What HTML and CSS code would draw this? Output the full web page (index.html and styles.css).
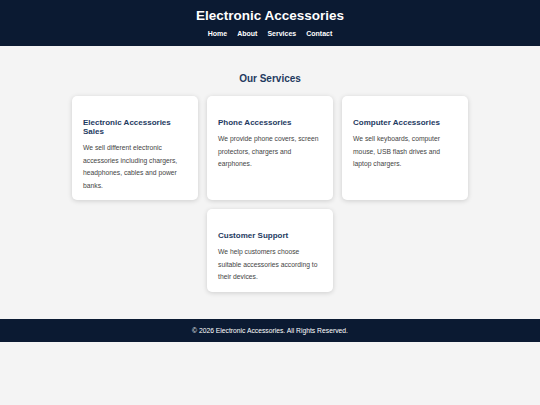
FILE: index.html
```html
<!DOCTYPE html>
<html lang="en">
<head>
<meta charset="utf-8">
<title>Electronic Accessories</title>
<link rel="stylesheet" href="styles.css">
</head>
<body>
<header class="site-header">
  <h1 class="site-title">Electronic Accessories</h1>
  <nav class="site-nav">
    <a href="#">Home</a>
    <a href="#">About</a>
    <a href="#">Services</a>
    <a href="#">Contact</a>
  </nav>
</header>
<main class="services">
  <h2 class="services-title">Our Services</h2>
  <div class="cards">
    <div class="card">
      <h3>Electronic Accessories Sales</h3>
      <p>We sell different electronic accessories including chargers, headphones, cables and power banks.</p>
    </div>
    <div class="card">
      <h3>Phone Accessories</h3>
      <p>We provide phone covers, screen protectors, chargers and earphones.</p>
    </div>
    <div class="card">
      <h3>Computer Accessories</h3>
      <p>We sell keyboards, computer mouse, USB flash drives and laptop chargers.</p>
    </div>
    <div class="card">
      <h3>Customer Support</h3>
      <p>We help customers choose suitable accessories according to their devices.</p>
    </div>
  </div>
</main>
<footer class="site-footer">
  <p>© 2026 Electronic Accessories. All Rights Reserved.</p>
</footer>
</body>
</html>
```
FILE: styles.css
```css
* { box-sizing: border-box; }
body {
  margin: 0;
  background: #f4f4f4;
  font-family: "Liberation Sans", Arial, sans-serif;
  color: #333;
}
.site-header {
  background: #0b1a32;
  color: #fff;
  text-align: center;
  padding: 7px 0 7.5px;
}
.site-title {
  margin: 0;
  font-size: 13.5px;
  line-height: 18px;
  font-weight: bold;
}
.site-nav {
  margin-top: 3.5px;
  display: flex;
  justify-content: center;
  gap: 10px;
  line-height: 10px;
}
.site-nav a {
  color: #fff;
  text-decoration: none;
  font-size: 7px;
  font-weight: bold;
}
.services {
  padding: 26px 0 27px;
}
.services-title {
  margin: 0 0 10px;
  text-align: center;
  font-size: 10px;
  line-height: 14px;
  color: #1e3a5f;
}
.cards {
  width: 396px;
  margin: 0 auto;
  display: flex;
  flex-wrap: wrap;
  justify-content: center;
  gap: 9px 9px;
}
.card {
  width: 126px;
  background: #fff;
  border-radius: 5px;
  padding: 11px 11px 8px;
  box-shadow: 0 1px 5px rgba(0, 0, 0, 0.16);
}
.card h3 {
  margin: 10.5px 0 6.5px;
  font-size: 8px;
  line-height: 9px;
  color: #1e3a5f;
}
.card p {
  margin: 0;
  font-size: 6.75px;
  line-height: 12.5px;
  color: #444;
}
.site-footer {
  background: #0b1a32;
  color: #fff;
  text-align: center;
  padding: 7px 0;
}
.site-footer p {
  margin: 0;
  font-size: 6.75px;
  line-height: 9px;
}
```
